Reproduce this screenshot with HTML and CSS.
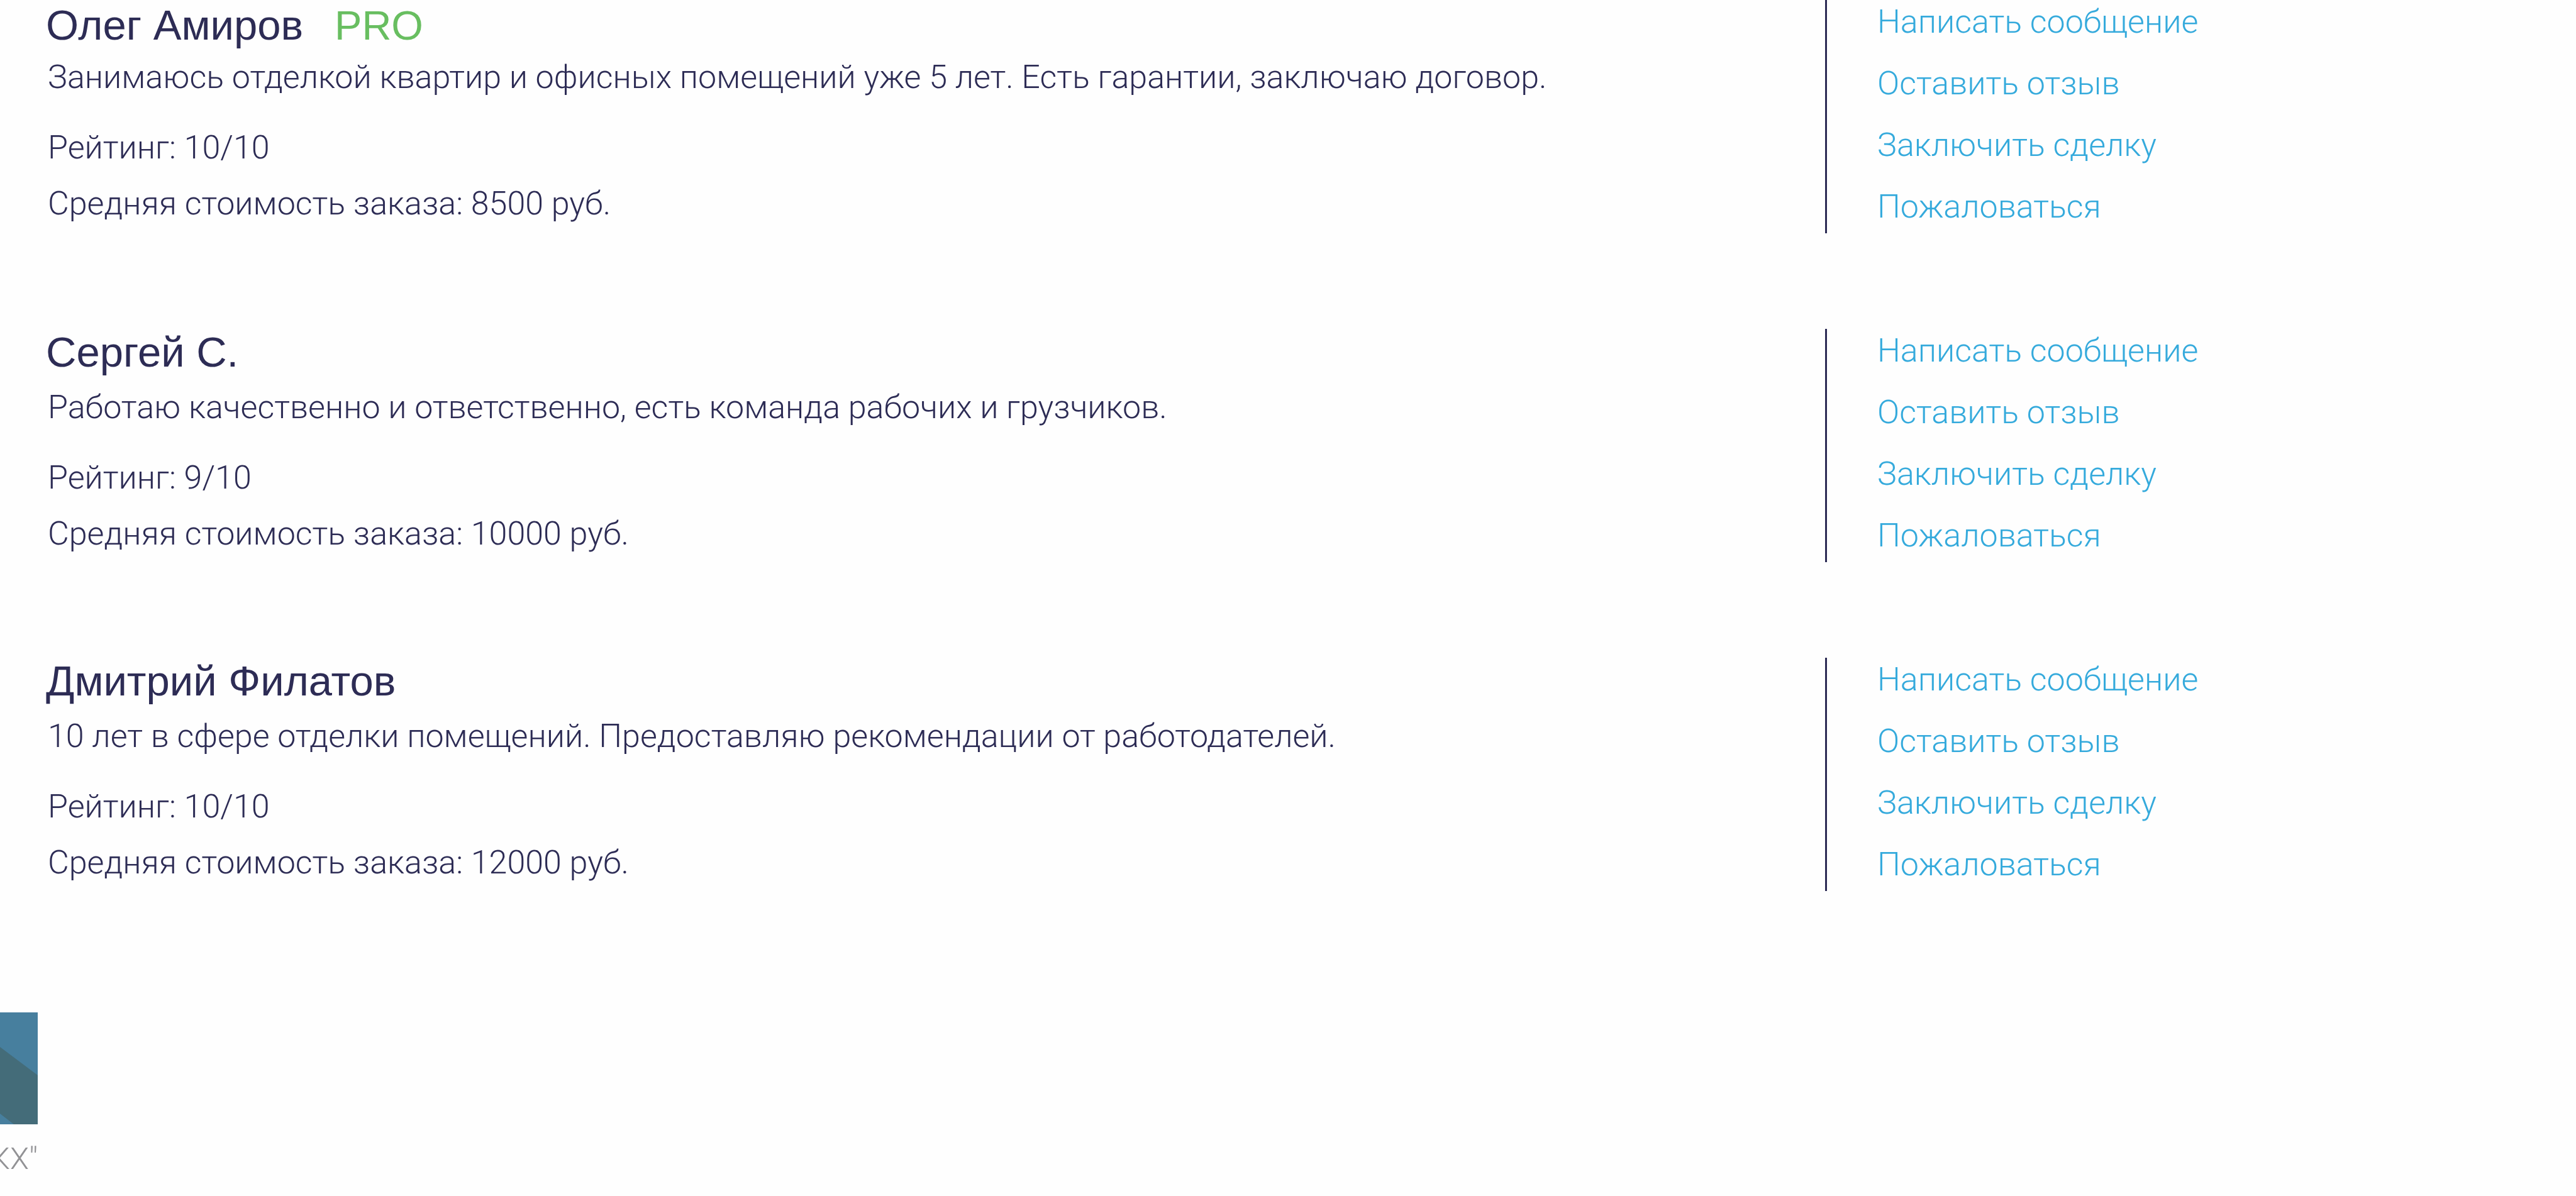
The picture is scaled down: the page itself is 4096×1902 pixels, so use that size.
FILE: index.html
```html
<!DOCTYPE html>
<html lang="ru">
<head>
  <meta charset="utf-8">
  <title>Специалисты</title>
  <link rel="stylesheet" href="styles.css">
</head>
<body>
  <main class="specialists">
    <article class="specialist specialist--pro">
      <div class="info">
        <h2 class="name">Олег Амиров <span class="badge">PRO</span></h2>
        <div class="details">
          <p class="about">Занимаюсь отделкой квартир и офисных помещений уже 5 лет. Есть гарантии, заключаю договор.</p>
          <p class="rating">Рейтинг: 10/10</p>
          <p class="price">Средняя стоимость заказа: 8500 руб.</p>
        </div>
      </div>
      <nav class="actions">
        <a href="#">Написать сообщение</a>
        <a href="#">Оставить отзыв</a>
        <a href="#">Заключить сделку</a>
        <a href="#">Пожаловаться</a>
      </nav>
    </article>

    <article class="specialist">
      <div class="info">
        <h2 class="name">Сергей С.</h2>
        <div class="details">
          <p class="about">Работаю качественно и ответственно, есть команда рабочих и грузчиков.</p>
          <p class="rating">Рейтинг: 9/10</p>
          <p class="price">Средняя стоимость заказа: 10000 руб.</p>
        </div>
      </div>
      <nav class="actions">
        <a href="#">Написать сообщение</a>
        <a href="#">Оставить отзыв</a>
        <a href="#">Заключить сделку</a>
        <a href="#">Пожаловаться</a>
      </nav>
    </article>

    <article class="specialist">
      <div class="info">
        <h2 class="name">Дмитрий Филатов</h2>
        <div class="details">
          <p class="about">10 лет в сфере отделки помещений. Предоставляю рекомендации от работодателей.</p>
          <p class="rating">Рейтинг: 10/10</p>
          <p class="price">Средняя стоимость заказа: 12000 руб.</p>
        </div>
      </div>
      <nav class="actions">
        <a href="#">Написать сообщение</a>
        <a href="#">Оставить отзыв</a>
        <a href="#">Заключить сделку</a>
        <a href="#">Пожаловаться</a>
      </nav>
    </article>
  </main>

  <footer class="footer">
    <figure class="partner">
      <svg class="banner" viewBox="0 0 60 178" aria-hidden="true">
        <rect width="60" height="178" fill="#477f9e"/>
        <path d="M0 55 L60 100 V178 H22 L0 161 Z" fill="#446c79"/>
      </svg>
      <figcaption class="caption">КХ"</figcaption>
    </figure>
  </footer>
</body>
</html>
```
FILE: styles.css
```css
* {
  box-sizing: border-box;
}

body {
  margin: 0;
  overflow-x: hidden;
  background: #fefefe;
  color: #2d2c55;
  font: 330 52px/64px Roboto, "Liberation Sans", sans-serif;
}

h2,
p,
figure {
  margin: 0;
}

/* Specialist list */
.specialists {
  display: flex;
  flex-direction: column;
  gap: 152px;
  padding-left: 73px;
}

.specialist {
  display: grid;
  grid-template-columns: minmax(0, 2829fr) minmax(0, 1194fr);
}

.info {
  padding-top: 1px;
}

.name {
  display: flex;
  align-items: baseline;
  gap: 50px;
  font: 400 67px/72px "Liberation Sans", sans-serif;
}

.badge {
  color: #68be60;
  font-size: 65px;
}

.details {
  padding: 20px 0 0 3px;
}

.rating {
  margin-top: 48px;
}

.price {
  margin-top: 25px;
}

.specialist--pro .info {
  padding-top: 4px;
}

.specialist--pro .details {
  padding-top: 14px;
}

/* Links beside each specialist */
.actions {
  display: flex;
  flex-direction: column;
  align-items: flex-start;
  gap: 32px;
  padding: 2px 0 9px 80px;
  border-left: 3px solid #2d2c55;
}

.actions a {
  color: #35aadc;
  line-height: 66px;
  text-decoration: none;
}

/* Footer */
.footer {
  display: flex;
  padding-top: 193px;
}

.partner {
  width: 60px;
}

.banner {
  display: block;
  width: 100%;
}

.caption {
  display: flex;
  justify-content: flex-end;
  margin-top: 25px;
  color: #929295;
  font-size: 49px;
  line-height: 60px;
}
```
